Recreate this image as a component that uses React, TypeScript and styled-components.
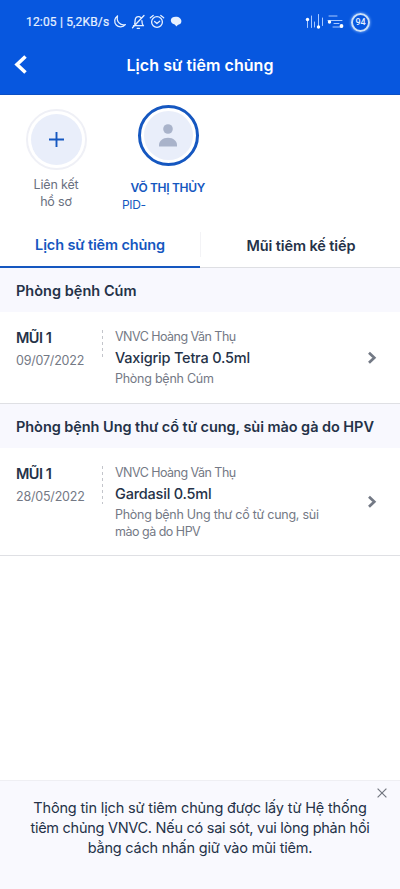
import React from "react";
import styled, { createGlobalStyle } from "styled-components";

const Global = createGlobalStyle`
  * { box-sizing: border-box; }
  html, body { margin: 0; padding: 0; background: #fff; }
  body { font-family: Inter, "Noto Sans", sans-serif; color: #253248; }
  button { border: 0; padding: 0; margin: 0; background: none; font: inherit; color: inherit; display: flex; }
`;

const Screen = styled.div`
  width: 400px;
  height: 889px;
  display: flex;
  flex-direction: column;
  overflow: hidden;
  background: #fff;
`;

const Text = styled.div<{ $size: number; $line: number; $weight?: number; $track?: number; $color?: string }>`
  font-size: ${(p) => p.$size}px;
  line-height: ${(p) => p.$line}px;
  font-weight: ${(p) => p.$weight ?? 400};
  letter-spacing: ${(p) => p.$track ?? 0}px;
  color: ${(p) => p.$color ?? "#253248"};
  white-space: nowrap;
`;

const Header = styled.header`
  height: 95px;
  flex: none;
  background: #0757df;
  border-bottom: 1px solid #0b4fc4;
`;

const StatusBar = styled.div`
  height: 43px;
  padding: 1px 30px 0 26px;
  display: flex;
  align-items: center;
  color: #e6f0ff;
`;

const Clock = styled.span`
  font: 400 12px/16px Roboto, sans-serif;
  letter-spacing: 0.17px;
  white-space: nowrap;
  width: 86px;
  -webkit-text-stroke: 0.2px #e6f0ff;
`;

const StatusIcons = styled.div`
  display: flex;
  align-items: center;
`;

const StatusEnd = styled(StatusIcons)`
  margin-left: auto;
`;

const TitleBar = styled.div`
  height: 44px;
  display: grid;
  grid-template-columns: 42px 1fr 42px;
  align-items: center;
  justify-items: center;
`;

const Profiles = styled.section`
  height: 125px;
  flex: none;
  display: flex;
`;

const LinkProfile = styled.div`
  width: 112px;
  padding-top: 14px;
  display: flex;
  flex-direction: column;
  align-items: center;
`;

const ActiveProfile = styled.div`
  width: 112px;
  padding-top: 10px;
  display: flex;
  flex-direction: column;
  align-items: center;
`;

const Avatar = styled.div<{ $active?: boolean }>`
  width: 61px;
  height: 61px;
  flex: none;
  border-radius: 50%;
  border: ${(p) => (p.$active ? "3px solid #1557c0" : "2px solid #eff0f6")};
  padding: 3px;
  display: flex;
`;

const AvatarFill = styled.div`
  flex: 1;
  border-radius: 50%;
  background: #e9eefa;
  display: flex;
  align-items: center;
  justify-content: center;
`;

const LinkLabel = styled.div`
  margin-top: 6px;
  text-align: center;
`;

const Identity = styled.div`
  align-self: stretch;
  padding: 13px 0 0 10px;
`;

const Name = styled.div`
  padding-left: 8.5px;
`;

const Tabs = styled.nav`
  height: 48px;
  flex: none;
  display: grid;
  grid-template-columns: 1fr 1fr;
`;

const Tab = styled.div<{ $active?: boolean }>`
  display: flex;
  justify-content: center;
  padding-top: ${(p) => (p.$active ? 14 : 15)}px;
  padding-left: ${(p) => (p.$active ? 0 : 2)}px;
  border-bottom: ${(p) => (p.$active ? "2px solid #1557c0" : "1px solid #dedfe3")};
  background: ${(p) => (p.$active ? "none" : "linear-gradient(#f3f3f6, #f3f3f6) 0 12px / 1px 25px no-repeat")};
`;

const SectionHead = styled.div`
  height: 44px;
  flex: none;
  padding: 12px 16px 0;
  background: #f8f8fe;
`;

const Dose = styled.article<{ $height: number }>`
  height: ${(p) => p.$height}px;
  flex: none;
  display: flex;
  border-bottom: 1px solid #dfe0e4;
`;

const DoseWhen = styled.div`
  width: 102px;
  padding: 15px 0 0 16px;
`;

const Dashes = styled.div<{ $height: number }>`
  width: 1px;
  height: ${(p) => p.$height}px;
  margin-top: 18px;
  background: repeating-linear-gradient(#c3c5cb 0 3px, transparent 3px 6px);
`;

const DoseInfo = styled.div`
  flex: 1;
  padding: 15px 0 0 12px;
`;

const DoseArrow = styled.div`
  width: 33px;
  display: flex;
  align-items: center;
`;

const Notice = styled.aside`
  height: 109px;
  flex: none;
  margin-top: auto;
  border-top: 1px solid #efeff3;
  background: #f9f9fe;
  position: relative;
  padding-top: 17px;
  display: flex;
  flex-direction: column;
  align-items: center;
`;

const Close = styled.button`
  && { position: absolute; top: 7px; right: 13px; }
`;

const Chevron = () => (
  <svg width="10" height="14" viewBox="0 0 10 14" fill="none">
    <path d="M2 1.700 7.300 6.700 2 11.700" stroke="#737985" strokeWidth="2.700" />
  </svg>
);

const StatusGlyphs = () => (
  <svg width="72" height="18" viewBox="0 0 72 18" fill="none" stroke="#e6f0ff" strokeWidth="1.300" strokeLinecap="round" strokeLinejoin="round">
    <path d="M5.500 3A5.900 5.900 0 1 0 13.300 11.600C8.500 13 4 8.500 5.500 3Z" />
    <path d="M21.500 12.700h10c-1.300-1-1.600-2.300-1.600-5M22.600 11c.5-1.100.4-2.100.5-3.600.2-2 1.500-3.700 3.400-3.700.9 0 1.700.3 2.300 1M32 2.500 20.500 14.800M25.200 15.300h2.300" />
    <circle cx="45" cy="9" r="5.400" />
    <path d="m42.600 8.500 2.300 2 2.800-2.300M38.300 4.800l2.900-2.300M51.700 4.800l-2.900-2.300" />
    <path d="M60 4.800c2.200-1.400 6.200-1.200 8 .4 1.900 1.700 2 4.900-.4 6.100-1.100.6-2.200.6-3.100 2.300l-1.800-2.200c-3.400-.3-5.200-4.300-2.700-6.600Z" fill="#e6f0ff" stroke="none" />
  </svg>
);

const Equalizers = () => (
  <svg width="42" height="18" viewBox="0 0 42 18" fill="none" stroke="#a8c9ff" strokeWidth="1" strokeLinecap="round">
    <path d="M4.500 5.500v9M8.500 3v11.500M11.500 9v5M15.500 1.500v13M19.500 5v7.500" />
    <path d="M26 3h8M25 7.500h14M31 10.500h5M30 14h9" />
    <g fill="#fff" stroke="none">
      <circle cx="4.500" cy="6.500" r="1.700" />
      <circle cx="15.500" cy="14" r="1.700" />
      <circle cx="26.500" cy="9" r="1.700" />
      <circle cx="38.500" cy="13" r="1.900" />
    </g>
  </svg>
);

const Battery = styled.div`
  width: 19px;
  height: 19px;
  margin-left: 6px;
  border: 2px solid #cbe0f8;
  border-radius: 50%;
  box-shadow: 0 0 3px #9dc4ff;
  display: flex;
  align-items: center;
  justify-content: center;
  font: 500 9px/15px Roboto, sans-serif;
  letter-spacing: -0.2px;
  color: #e6f0ff;
`;

type DoseData = { date: string; name: string; notes: { text: string; track: number }[]; height: number; dash: number };

const DoseRow = ({ d }: { d: DoseData }) => (
  <Dose $height={d.height}>
    <DoseWhen>
      <Text $size={14.5} $line={22} $weight={600} $track={-0.5}>MŨI 1</Text>
      <Text $size={12.5} $line={24} $track={-0.2} $color="#747985">{d.date}</Text>
    </DoseWhen>
    <Dashes $height={d.dash} />
    <DoseInfo>
      <Text $size={12.5} $line={19} $track={-0.53} $color="#747985">VNVC Hoàng Văn Thụ</Text>
      <Text $size={14.5} $line={24} $weight={500} $track={-0.2}>{d.name}</Text>
      {d.notes.map((n) => (
        <Text key={n.text} $size={12.5} $line={17} $track={n.track} $color="#747985">{n.text}</Text>
      ))}
    </DoseInfo>
    <DoseArrow><Chevron /></DoseArrow>
  </Dose>
);

const cumDose: DoseData = {
  date: "09/07/2022", name: "Vaxigrip Tetra 0.5ml",
  notes: [{ text: "Phòng bệnh Cúm", track: -0.25 }], height: 92, dash: 27,
};
const hpvDose: DoseData = {
  date: "28/05/2022", name: "Gardasil 0.5ml",
  notes: [{ text: "Phòng bệnh Ung thư cổ tử cung, sùi", track: -0.26 }, { text: "mào gà do HPV", track: -0.5 }], height: 108, dash: 38,
};

export default function App() {
  return (
    <Screen>
      <Global />
      <Header>
        <StatusBar>
          <Clock>12:05 | 5,2KB/s</Clock>
          <StatusIcons><StatusGlyphs /></StatusIcons>
          <StatusEnd><Equalizers /><Battery>94</Battery></StatusEnd>
        </StatusBar>
        <TitleBar>
          <button aria-label="Quay lại">
            <svg width="14" height="20" viewBox="0 0 14 20" fill="none"><path d="M11.500 1.500 3 9.500l8.500 8" stroke="#fff" strokeWidth="3.600" /></svg>
          </button>
          <Text $size={16} $line={22} $weight={600} $track={0.06} $color="#fff">Lịch sử tiêm chủng</Text>
        </TitleBar>
      </Header>
      <Profiles>
        <LinkProfile>
          <Avatar><AvatarFill>
            <svg width="15" height="15" viewBox="0 0 15 15"><path d="M7.500 0v15M0 7.500h15" stroke="#1557c0" strokeWidth="1.900" /></svg>
          </AvatarFill></Avatar>
          <LinkLabel>
            <Text $size={12.5} $line={17} $color="#697080" $track={-0.15}>Liên kết</Text>
            <Text $size={12.5} $line={17} $color="#697080" $track={-0.15}>hồ sơ</Text>
          </LinkLabel>
        </LinkProfile>
        <ActiveProfile>
          <Avatar $active><AvatarFill>
            <svg width="18" height="23" viewBox="0 0 18 23" fill="#a9b3ca"><circle cx="9" cy="5" r="4.800" /><path d="M0 22.500V21c0-4 3.600-7.300 9-7.300s9 3.300 9 7.300v1.500Z" /></svg>
          </AvatarFill></Avatar>
          <Identity>
            <Name><Text $size={12} $line={17} $weight={600} $track={-0.33} $color="#1557c0">VÕ THỊ THỦY</Text></Name>
            <Text $size={12} $line={17} $track={-0.35} $color="#1557c0">PID-</Text>
          </Identity>
        </ActiveProfile>
      </Profiles>
      <Tabs>
        <Tab $active><Text $size={14.5} $line={22} $weight={600} $track={-0.14} $color="#1557c0">Lịch sử tiêm chủng</Text></Tab>
        <Tab><Text $size={14.5} $line={22} $weight={600} $track={-0.1}>Mũi tiêm kế tiếp</Text></Tab>
      </Tabs>
      <SectionHead><Text $size={14.5} $line={22} $weight={600} $track={0.02}>Phòng bệnh Cúm</Text></SectionHead>
      <DoseRow d={cumDose} />
      <SectionHead><Text $size={14.5} $line={22} $weight={600} $track={-0.06}>Phòng bệnh Ung thư cổ tử cung, sùi mào gà do HPV</Text></SectionHead>
      <DoseRow d={hpvDose} />
      <Notice>
        <Close aria-label="Đóng">
          <svg width="10" height="10" viewBox="0 0 10 10"><path d="m.6.6 8.800 8.800M9.400.6.6 9.400" stroke="#737780" strokeWidth="1.200" /></svg>
        </Close>
        <Text $size={14.5} $line={20} $track={-0.15}>Thông tin lịch sử tiêm chủng được lấy từ Hệ thống</Text>
        <Text $size={14.5} $line={20} $track={-0.27}>tiêm chủng VNVC. Nếu có sai sót, vui lòng phản hồi</Text>
        <Text $size={14.5} $line={20} $track={-0.2}>bằng cách nhấn giữ vào mũi tiêm.</Text>
      </Notice>
    </Screen>
  );
}
